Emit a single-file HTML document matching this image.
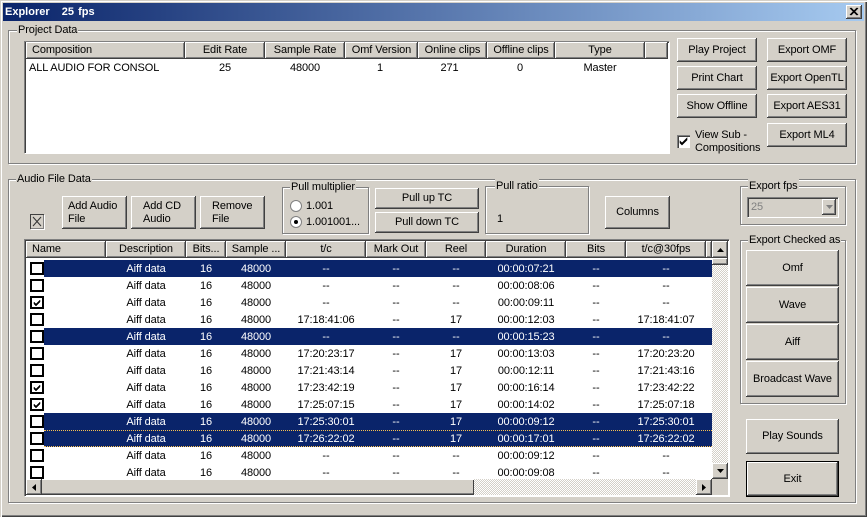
<!DOCTYPE html>
<html><head><meta charset="utf-8"><style>
html,body{margin:0;padding:0}
body{width:867px;height:517px;overflow:hidden;position:relative;background:#d4d0c8;font:11px/14px "Liberation Sans",Arial,sans-serif;letter-spacing:-.1px;color:#000}
div,span{position:absolute;box-sizing:border-box;white-space:nowrap}
.win{left:0;top:0;width:867px;height:517px;box-shadow:inset 1px 1px #d4d0c8,inset 2px 2px #fff,inset -1px -1px #404040,inset -2px -2px #808080}
.title{left:3px;top:3px;width:861px;height:18px;background:linear-gradient(90deg,#0a246a,#a6caf0);color:#fff;font-weight:bold;letter-spacing:0;line-height:18px;padding-left:2px;word-spacing:1px;white-space:pre}
.x{left:846px;top:5px;width:16px;height:14px;background:#d4d0c8;box-shadow:inset -1px -1px #404040,inset 1px 1px #fff,inset -2px -2px #808080}
.g{border:1px solid #808080;box-shadow:1px 1px #fff,inset 1px 1px #fff}
.l{background:#d4d0c8;padding:0 1px;left:8px;top:-8px;height:14px}
.b{background:#d4d0c8;box-shadow:inset -1px -1px #404040,inset 1px 1px #fff,inset -2px -2px #808080;text-align:center;display:flex;align-items:center;justify-content:center;white-space:pre-line;line-height:13px}
.s{background:#fff;box-shadow:inset 1px 1px #808080,inset 2px 2px #404040,1px 1px #fff}
.h{background:#d4d0c8;height:17px;top:0;text-align:center;line-height:17px;box-shadow:inset -1px -1px #404040,inset 1px 1px #fff,inset -2px -2px #808080}
.r{left:26px;width:686px;height:17px;line-height:18px}
.r span{top:0;text-align:center}
.r span:nth-child(1){left:80px;width:80px}
.r span:nth-child(2){left:160px;width:40px}
.r span:nth-child(3){left:200px;width:60px}
.r span:nth-child(4){left:260px;width:80px}
.r span:nth-child(5){left:340px;width:60px}
.r span:nth-child(6){left:400px;width:60px}
.r span:nth-child(7){left:460px;width:80px}
.r span:nth-child(8){left:540px;width:60px}
.r span:nth-child(9){left:600px;width:80px}
.on{color:#fff}
.sel{left:44px;width:668px;height:17px;background:#0a246a}
.c{left:30px;width:14px;height:13px;border:2px solid #000;background:#fff}
.t{background:conic-gradient(#fff 25%,#d4d0c8 0 50%,#fff 0 75%,#d4d0c8 0) 0 0/2px 2px}
</style></head><body>
<div class="win"></div>
<div class="title">Explorer   25 fps</div>
<div class="x"><svg width="16" height="14" style="position:absolute;left:0;top:0"><path d="M4 3l7 7M5 3l7 7M11 3l-7 7M12 3l-7 7" stroke="#000" stroke-width="1" fill="none"/></svg></div>

<div class="g" style="left:8px;top:30px;width:848px;height:134px"><div class="l">Project Data</div></div>
<div class="s" style="left:24px;top:41px;width:645px;height:112px"></div>
<div class="h" style="left:26px;top:42px;width:159px;text-align:left;padding-left:6px">Composition</div>
<div class="h" style="left:185px;top:42px;width:80px">Edit Rate</div>
<div class="h" style="left:265px;top:42px;width:80px">Sample Rate</div>
<div class="h" style="left:345px;top:42px;width:73px">Omf Version</div>
<div class="h" style="left:418px;top:42px;width:69px">Online clips</div>
<div class="h" style="left:487px;top:42px;width:68px">Offline clips</div>
<div class="h" style="left:555px;top:42px;width:90px">Type</div>
<div class="h" style="left:645px;top:42px;width:23px"></div>
<div style="left:29px;top:61px">ALL AUDIO FOR CONSOL</div>
<div style="left:185px;top:61px;width:80px;text-align:center">25</div>
<div style="left:265px;top:61px;width:80px;text-align:center">48000</div>
<div style="left:345px;top:61px;width:70px;text-align:center">1</div>
<div style="left:418px;top:61px;width:63px;text-align:center">271</div>
<div style="left:487px;top:61px;width:66px;text-align:center">0</div>
<div style="left:555px;top:61px;width:90px;text-align:center">Master</div>

<div class="b" style="left:677px;top:38px;width:80px;height:24px">Play Project</div>
<div class="b" style="left:677px;top:66px;width:80px;height:24px">Print Chart</div>
<div class="b" style="left:677px;top:94px;width:80px;height:24px">Show Offline</div>
<div class="b" style="left:767px;top:38px;width:80px;height:24px">Export OMF</div>
<div class="b" style="left:767px;top:66px;width:80px;height:24px">Export OpenTL</div>
<div class="b" style="left:767px;top:94px;width:80px;height:24px">Export AES31</div>
<div class="b" style="left:767px;top:123px;width:80px;height:24px">Export ML4</div>
<div style="left:677px;top:135px;width:13px;height:13px;background:#fff;box-shadow:inset 1px 1px #808080,inset 2px 2px #404040"><svg width="13" height="13" style="position:absolute;left:0;top:0"><path d="M3 6l2 2 5-5v2l-5 5-2-2z" fill="#000" stroke="#000" stroke-width=".6"/></svg></div>
<div style="left:695px;top:128px">View Sub -</div>
<div style="left:695px;top:141px">Compositions</div>

<div class="g" style="left:8px;top:179px;width:848px;height:324px"><div class="l" style="left:7px">Audio File Data</div></div>
<div style="left:30px;top:214px;width:14px;height:15px;background:#d4d0c8;box-shadow:inset 1px 1px #404040,inset -1px -1px #808080,1px 1px #fff"><svg width="14" height="15" style="position:absolute;left:0;top:0"><path d="M3 3l8 9M11 3l-8 9" stroke="#333" fill="none"/></svg></div>
<div class="b" style="left:62px;top:196px;width:65px;height:33px;justify-content:flex-start;text-align:left;padding-left:6px">Add Audio
File</div>
<div class="b" style="left:131px;top:196px;width:65px;height:33px;justify-content:flex-start;text-align:left;padding-left:12px">Add CD
Audio</div>
<div class="b" style="left:200px;top:196px;width:65px;height:33px;justify-content:flex-start;text-align:left;padding-left:12px">Remove
File</div>

<div class="g" style="left:282px;top:187px;width:87px;height:47px"><div class="l" style="left:7px">Pull multiplier</div></div>
<div style="left:290px;top:200px;width:12px;height:12px;border-radius:50%;background:#fff;border:1px solid #808080"></div>
<div style="left:306px;top:199px">1.001</div>
<div style="left:290px;top:216px;width:12px;height:12px;border-radius:50%;background:#fff;border:1px solid #808080"><div style="left:3px;top:3px;width:4px;height:4px;border-radius:50%;background:#000"></div></div>
<div style="left:306px;top:215px">1.001001...</div>
<div class="b" style="left:375px;top:188px;width:104px;height:21px">Pull up TC</div>
<div class="b" style="left:375px;top:212px;width:104px;height:21px">Pull down TC</div>
<div class="g" style="left:485px;top:186px;width:104px;height:48px"><div class="l" style="left:9px">Pull ratio</div></div>
<div style="left:497px;top:212px">1</div>
<div class="b" style="left:605px;top:196px;width:65px;height:33px">Columns</div>

<div class="g" style="left:740px;top:186px;width:106px;height:39px"><div class="l" style="left:7px">Export fps</div></div>
<div style="left:747px;top:197px;width:91px;height:20px;background:#d4d0c8;color:#808080;padding:3px 0 0 4px;box-shadow:inset 1px 1px #808080,inset 2px 2px #404040,1px 1px #fff">25</div>
<div class="b" style="left:822px;top:199px;width:14px;height:16px"><svg width="7" height="4"><path d="M0 0h7l-3.500 4z" fill="#808080"/></svg></div>
<div class="g" style="left:740px;top:240px;width:106px;height:164px"><div class="l" style="left:7px">Export Checked as</div></div>
<div class="b" style="left:746px;top:250px;width:93px;height:36px">Omf</div>
<div class="b" style="left:746px;top:287px;width:93px;height:36px">Wave</div>
<div class="b" style="left:746px;top:324px;width:93px;height:36px">Aiff</div>
<div class="b" style="left:746px;top:361px;width:93px;height:36px">Broadcast Wave</div>
<div class="b" style="left:746px;top:419px;width:93px;height:35px">Play Sounds</div>
<div class="b" style="left:746px;top:461px;width:93px;height:36px;border:1px solid #000">Exit</div>

<div class="s" style="left:24px;top:239px;width:705px;height:257px"></div>
<div class="h" style="left:26px;top:241px;width:80px;text-align:left;padding-left:6px">Name</div>
<div class="h" style="left:106px;top:241px;width:80px">Description</div>
<div class="h" style="left:186px;top:241px;width:40px">Bits...</div>
<div class="h" style="left:226px;top:241px;width:60px">Sample ...</div>
<div class="h" style="left:286px;top:241px;width:80px">t/c</div>
<div class="h" style="left:366px;top:241px;width:60px">Mark Out</div>
<div class="h" style="left:426px;top:241px;width:60px">Reel</div>
<div class="h" style="left:486px;top:241px;width:80px">Duration</div>
<div class="h" style="left:566px;top:241px;width:60px">Bits</div>
<div class="h" style="left:626px;top:241px;width:80px">t/c@30fps</div>
<div class="h" style="left:706px;top:241px;width:6px"></div>

<div class="sel" style="top:260px"></div>
<div class="sel" style="top:328px"></div>
<div class="sel" style="top:413px"></div>
<div class="sel" style="top:430px;border-top:1px dotted #f8c050;border-bottom:1px dotted #f8c050"></div>

<div class="c" style="top:262px"></div>
<div class="c" style="top:279px"></div>
<div class="c" style="top:296px"><svg width="10" height="9" style="position:absolute;left:0;top:0"><path d="M2 4l2 2 4-4v2l-4 4-2-2z" fill="#000" stroke="#000" stroke-width=".5"/></svg></div>
<div class="c" style="top:313px"></div>
<div class="c" style="top:330px"></div>
<div class="c" style="top:347px"></div>
<div class="c" style="top:364px"></div>
<div class="c" style="top:381px"><svg width="10" height="9" style="position:absolute;left:0;top:0"><path d="M2 4l2 2 4-4v2l-4 4-2-2z" fill="#000" stroke="#000" stroke-width=".5"/></svg></div>
<div class="c" style="top:398px"><svg width="10" height="9" style="position:absolute;left:0;top:0"><path d="M2 4l2 2 4-4v2l-4 4-2-2z" fill="#000" stroke="#000" stroke-width=".5"/></svg></div>
<div class="c" style="top:415px"></div>
<div class="c" style="top:432px"></div>
<div class="c" style="top:449px"></div>
<div class="c" style="top:466px"></div>

<div class="r on" style="top:260px"><span>Aiff data</span><span>16</span><span>48000</span><span>--</span><span>--</span><span>--</span><span>00:00:07:21</span><span>--</span><span>--</span></div>
<div class="r" style="top:277px"><span>Aiff data</span><span>16</span><span>48000</span><span>--</span><span>--</span><span>--</span><span>00:00:08:06</span><span>--</span><span>--</span></div>
<div class="r" style="top:294px"><span>Aiff data</span><span>16</span><span>48000</span><span>--</span><span>--</span><span>--</span><span>00:00:09:11</span><span>--</span><span>--</span></div>
<div class="r" style="top:311px"><span>Aiff data</span><span>16</span><span>48000</span><span>17:18:41:06</span><span>--</span><span>17</span><span>00:00:12:03</span><span>--</span><span>17:18:41:07</span></div>
<div class="r on" style="top:328px"><span>Aiff data</span><span>16</span><span>48000</span><span>--</span><span>--</span><span>--</span><span>00:00:15:23</span><span>--</span><span>--</span></div>
<div class="r" style="top:345px"><span>Aiff data</span><span>16</span><span>48000</span><span>17:20:23:17</span><span>--</span><span>17</span><span>00:00:13:03</span><span>--</span><span>17:20:23:20</span></div>
<div class="r" style="top:362px"><span>Aiff data</span><span>16</span><span>48000</span><span>17:21:43:14</span><span>--</span><span>17</span><span>00:00:12:11</span><span>--</span><span>17:21:43:16</span></div>
<div class="r" style="top:379px"><span>Aiff data</span><span>16</span><span>48000</span><span>17:23:42:19</span><span>--</span><span>17</span><span>00:00:16:14</span><span>--</span><span>17:23:42:22</span></div>
<div class="r" style="top:396px"><span>Aiff data</span><span>16</span><span>48000</span><span>17:25:07:15</span><span>--</span><span>17</span><span>00:00:14:02</span><span>--</span><span>17:25:07:18</span></div>
<div class="r on" style="top:413px"><span>Aiff data</span><span>16</span><span>48000</span><span>17:25:30:01</span><span>--</span><span>17</span><span>00:00:09:12</span><span>--</span><span>17:25:30:01</span></div>
<div class="r on" style="top:430px"><span>Aiff data</span><span>16</span><span>48000</span><span>17:26:22:02</span><span>--</span><span>17</span><span>00:00:17:01</span><span>--</span><span>17:26:22:02</span></div>
<div class="r" style="top:447px"><span>Aiff data</span><span>16</span><span>48000</span><span>--</span><span>--</span><span>--</span><span>00:00:09:12</span><span>--</span><span>--</span></div>
<div class="r" style="top:464px"><span>Aiff data</span><span>16</span><span>48000</span><span>--</span><span>--</span><span>--</span><span>00:00:09:08</span><span>--</span><span>--</span></div>

<div class="t" style="left:712px;top:241px;width:16px;height:222px"></div>
<div class="b" style="left:712px;top:241px;width:16px;height:17px"><svg width="7" height="4"><path d="M3.500 0L7 4H0z" fill="#000"/></svg></div>
<div class="b" style="left:712px;top:258px;width:16px;height:7px"></div>
<div class="b" style="left:712px;top:463px;width:16px;height:16px"><svg width="7" height="4"><path d="M0 0h7L3.500 4z" fill="#000"/></svg></div>
<div style="left:712px;top:479px;width:16px;height:16px;background:#d4d0c8"></div>
<div class="t" style="left:26px;top:479px;width:686px;height:16px"></div>
<div class="b" style="left:42px;top:479px;width:432px;height:16px;box-shadow:inset 0 1px #fff,inset 0 -1px #404040,inset -1px 0 #404040,inset 0 -2px #808080"></div>
<div class="b" style="left:26px;top:479px;width:16px;height:16px"><svg width="4" height="7"><path d="M4 0v7L0 3.500z" fill="#000"/></svg></div>
<div class="b" style="left:696px;top:479px;width:16px;height:16px"><svg width="4" height="7"><path d="M0 0v7l4-3.500z" fill="#000"/></svg></div>
</body></html>
